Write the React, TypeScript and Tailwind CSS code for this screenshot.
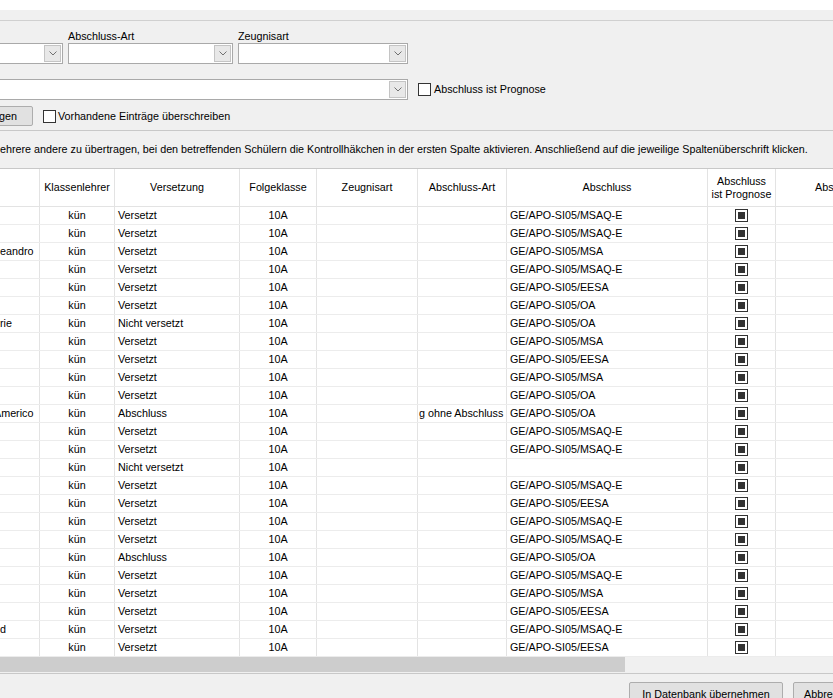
import React from "react";

type Row = {
  name: string;
  versetzung: string;
  art: string;
  abschluss: string;
};

const rows: Row[] = [
  { name: "", versetzung: "Versetzt", art: "", abschluss: "GE/APO-SI05/MSAQ-E" },
  { name: "", versetzung: "Versetzt", art: "", abschluss: "GE/APO-SI05/MSAQ-E" },
  { name: "eandro", versetzung: "Versetzt", art: "", abschluss: "GE/APO-SI05/MSA" },
  { name: "", versetzung: "Versetzt", art: "", abschluss: "GE/APO-SI05/MSAQ-E" },
  { name: "", versetzung: "Versetzt", art: "", abschluss: "GE/APO-SI05/EESA" },
  { name: "", versetzung: "Versetzt", art: "", abschluss: "GE/APO-SI05/OA" },
  { name: "rie", versetzung: "Nicht versetzt", art: "", abschluss: "GE/APO-SI05/OA" },
  { name: "", versetzung: "Versetzt", art: "", abschluss: "GE/APO-SI05/MSA" },
  { name: "", versetzung: "Versetzt", art: "", abschluss: "GE/APO-SI05/EESA" },
  { name: "", versetzung: "Versetzt", art: "", abschluss: "GE/APO-SI05/MSA" },
  { name: "", versetzung: "Versetzt", art: "", abschluss: "GE/APO-SI05/OA" },
  { name: "Americo", versetzung: "Abschluss", art: "g ohne Abschluss", abschluss: "GE/APO-SI05/OA" },
  { name: "", versetzung: "Versetzt", art: "", abschluss: "GE/APO-SI05/MSAQ-E" },
  { name: "", versetzung: "Versetzt", art: "", abschluss: "GE/APO-SI05/MSAQ-E" },
  { name: "", versetzung: "Nicht versetzt", art: "", abschluss: "" },
  { name: "", versetzung: "Versetzt", art: "", abschluss: "GE/APO-SI05/MSAQ-E" },
  { name: "", versetzung: "Versetzt", art: "", abschluss: "GE/APO-SI05/EESA" },
  { name: "", versetzung: "Versetzt", art: "", abschluss: "GE/APO-SI05/MSAQ-E" },
  { name: "", versetzung: "Versetzt", art: "", abschluss: "GE/APO-SI05/MSAQ-E" },
  { name: "", versetzung: "Abschluss", art: "", abschluss: "GE/APO-SI05/OA" },
  { name: "", versetzung: "Versetzt", art: "", abschluss: "GE/APO-SI05/MSAQ-E" },
  { name: "", versetzung: "Versetzt", art: "", abschluss: "GE/APO-SI05/MSA" },
  { name: "", versetzung: "Versetzt", art: "", abschluss: "GE/APO-SI05/EESA" },
  { name: "d", versetzung: "Versetzt", art: "", abschluss: "GE/APO-SI05/MSAQ-E" },
  { name: "", versetzung: "Versetzt", art: "", abschluss: "GE/APO-SI05/EESA" },
];

// Combo-Box im Windows-Stil
function Combo({ className }: { className: string }) {
  return (
    <div className={`flex h-[21px] items-stretch justify-end border border-[#a9a9a9] bg-white p-px ${className}`}>
      <div className="flex w-[17px] items-center justify-center border border-[#c4c4c4] bg-[#e8e8e8]">
        <svg width="8" height="5" viewBox="0 0 8 5">
          <path d="M0.5 0.5 L4 4 L7.5 0.5" fill="none" stroke="#707070" strokeWidth="1" />
        </svg>
      </div>
    </div>
  );
}

function CheckBox() {
  return <div className="h-[13px] w-[13px] shrink-0 border border-[#333333] bg-white" />;
}

function CheckedBox() {
  return (
    <div className="flex h-[13px] w-[13px] items-center justify-center border border-[#333333] bg-white">
      <div className="h-[7px] w-[7px] bg-[#333333]" />
    </div>
  );
}

const cell = "h-full shrink-0 overflow-hidden whitespace-nowrap border-r border-[#e3e3e3]";

export default function App() {
  return (
    <div className="relative flex h-[698px] w-[833px] flex-col overflow-hidden bg-[#f0f0f0] font-['Liberation_Sans',Arial,sans-serif] text-[10.75px] text-[#000000]">
      {/* oberer Rand */}
      <div className="h-[10px] shrink-0 bg-white" />
      <div className="h-[11px] shrink-0 border-b border-[#d0d0d0]" />

      {/* Auswahlfelder */}
      <div className="mt-[9px] flex h-[12px] shrink-0 gap-[5px]">
        <div className="w-[63px]" />
        <div className="w-[165px] leading-[12px]">Abschluss-Art</div>
        <div className="w-[170px] leading-[12px]">Zeugnisart</div>
      </div>
      <div className="mt-[1px] flex shrink-0 gap-[5px]">
        <Combo className="-ml-[2px] w-[65px]" />
        <Combo className="w-[165px]" />
        <Combo className="w-[170px]" />
      </div>

      <div className="mt-[15px] flex shrink-0 items-center">
        <Combo className="-ml-[2px] w-[410px]" />
        <div className="ml-[10px] flex items-center gap-[3px]">
          <CheckBox />
          <span>Abschluss ist Prognose</span>
        </div>
      </div>

      <div className="mt-[6px] flex h-[20px] shrink-0 items-center">
        <div className="-ml-[10px] flex h-[20px] w-[43px] items-center justify-end rounded-[2px] border border-[#adadad] bg-[#e1e1e1] pr-[15px]">
          gen
        </div>
        <div className="ml-[10px] flex items-center gap-[2px]">
          <CheckBox />
          <span>Vorhandene Einträge überschreiben</span>
        </div>
      </div>

      <div className="mt-[4px] h-px shrink-0 bg-[#c8c8c8]" />
      <div className="flex h-[37px] shrink-0 items-center whitespace-nowrap">
        ehrere andere zu übertragen, bei den betreffenden Schülern die Kontrollhäkchen in der ersten Spalte aktivieren. Anschließend auf die jeweilige Spaltenüberschrift klicken.
      </div>

      {/* Tabelle */}
      <div className="shrink-0 border-t border-[#c8c8c8] bg-white">
        <div className="flex h-[38px] border-b border-[#e3e3e3] text-center leading-[13px]">
          <div className={`${cell} w-[40px]`} />
          <div className={`${cell} flex w-[75px] items-center justify-center`}>Klassenlehrer</div>
          <div className={`${cell} flex w-[125px] items-center justify-center`}>Versetzung</div>
          <div className={`${cell} flex w-[77px] items-center justify-center`}>Folgeklasse</div>
          <div className={`${cell} flex w-[101px] items-center justify-center`}>Zeugnisart</div>
          <div className={`${cell} flex w-[89px] items-center justify-center`}>Abschluss-Art</div>
          <div className={`${cell} flex w-[201px] items-center justify-center`}>Abschluss</div>
          <div className={`${cell} flex w-[68px] flex-col items-center justify-center`}>
            <span>Abschluss</span>
            <span>ist Prognose</span>
          </div>
          <div className={`${cell} flex w-[100px] items-center pl-[39px]`}>Abschluss</div>
        </div>

        {rows.map((r, i) => (
          <div key={i} className="flex h-[18px] border-b border-[#ececec] leading-[17px]">
            <div className={`${cell} w-[40px]`}>
              <span className={r.name === "Americo" ? "-ml-[6px] inline-block" : ""}>{r.name}</span>
            </div>
            <div className={`${cell} w-[75px] text-center`}>kün</div>
            <div className={`${cell} w-[125px] pl-[3px]`}>{r.versetzung}</div>
            <div className={`${cell} w-[77px] text-center`}>10A</div>
            <div className={`${cell} w-[101px]`} />
            <div className={`${cell} w-[89px] pl-px`}>{r.art}</div>
            <div className={`${cell} w-[201px] pl-[3px]`}>{r.abschluss}</div>
            <div className={`${cell} flex w-[68px] items-center justify-center`}>
              <CheckedBox />
            </div>
            <div className={`${cell} w-[100px]`} />
          </div>
        ))}
      </div>

      {/* horizontale Scrollleiste */}
      <div className="flex h-[15px] shrink-0 bg-[#f0f0f0]">
        <div className="h-full w-[625px] bg-[#cdcdcd]" />
      </div>

      {/* Schaltflächen */}
      <div className="mt-[1px] h-px shrink-0 bg-[#c8c8c8]" />
      <div className="flex shrink-0 justify-end gap-[10px] pt-[8px]">
        <div className="flex h-[24px] w-[154px] items-center justify-center rounded-[2px] border border-[#adadad] bg-[#e1e1e1]">
          In Datenbank übernehmen
        </div>
        <div className="-mr-[40px] flex h-[24px] w-[80px] items-center rounded-[2px] border border-[#adadad] bg-[#e1e1e1] pl-[10px]">
          Abbrechen
        </div>
      </div>
    </div>
  );
}
